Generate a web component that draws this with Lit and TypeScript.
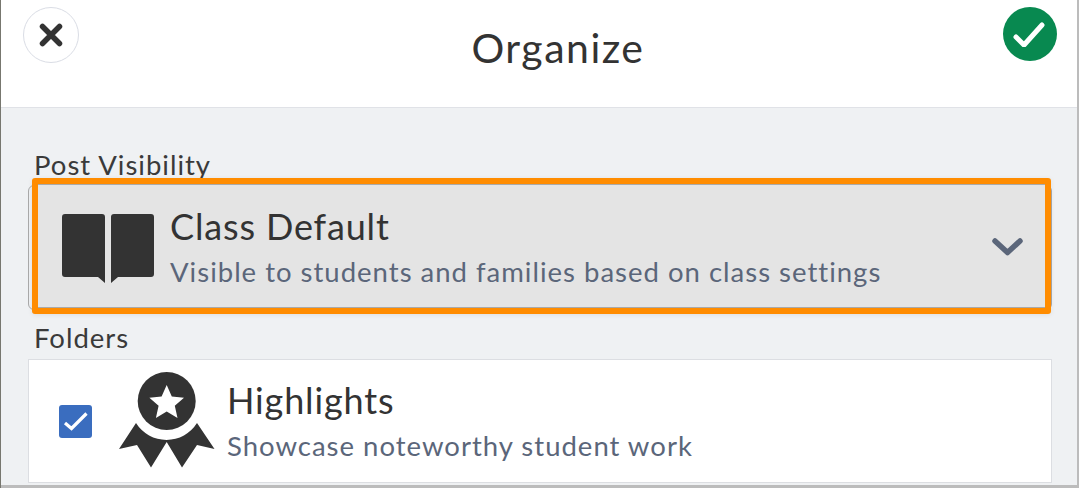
import { LitElement, html, css } from "lit";
import { customElement } from "lit/decorators.js";

@customElement("app-root")
export class AppRoot extends LitElement {
  static styles = css`
    :host {
      display: flex;
      flex-direction: column;
      width: 1079px;
      height: 488px;
      box-sizing: border-box;
      overflow: hidden;
      background: #fff;
      font-family: "Lato", sans-serif;
      color: #333;
      border-left: 1px solid #77776f;
      border-right: 2px solid #bcbcbc;
    }
    .header {
      height: 107px;
      flex: none;
      box-sizing: border-box;
      display: grid;
      grid-template-columns: 1fr auto 1fr;
      align-items: start;
      padding: 7px 20px 0 22px;
    }
    .close {
      width: 56px;
      height: 56px;
      box-sizing: border-box;
      border: 1px solid #dadde5;
      border-radius: 50%;
      display: flex;
      align-items: center;
      justify-content: center;
      background: #fff;
    }
    .title {
      font-size: 41px;
      line-height: 50px;
      margin-top: 16px;
      padding-left: 36px;
      letter-spacing: 1.5px;
    }
    .ok {
      justify-self: end;
      width: 54px;
      height: 54px;
      border-radius: 50%;
      background: #088950;
      display: flex;
      align-items: center;
      justify-content: center;
    }
    .body {
      flex: 1;
      background: #eff1f3;
      border-top: 1px solid #e0e2e7;
      padding: 42px 25px 0 27px;
      display: flex;
      flex-direction: column;
      min-height: 0;
    }
    .label {
      font-size: 27.5px;
      line-height: 30px;
      padding-left: 6px;
      color: #3a3a3a;
      letter-spacing: 1px;
    }
    .select {
      position: relative;
      margin-top: 5px;
      height: 125px;
      box-sizing: border-box;
      border: 1px solid #a9a9a9;
      border-radius: 6px;
      display: flex;
      align-items: center;
      padding: 0 27px 0 33px;
    }
    .ring {
      position: absolute;
      left: 3px;
      right: 0;
      top: -8px;
      bottom: -5px;
      box-sizing: border-box;
      background: #e4e4e4;
      border: 6px solid #ff8c00;
      border-radius: 3px;
      box-shadow: inset 0 1px 0 #a9a9a9, inset 0 -1px 0 #a9a9a9, 0 1px 5px rgba(0, 0, 0, 0.08);
    }
    .select > svg,
    .select > .text {
      position: relative;
    }
    .book {
      margin-top: 2px;
    }
    .text {
      flex: 1;
      margin-left: 16px;
      padding-top: 4px;
      display: flex;
      flex-direction: column;
    }
    .name {
      font-size: 36px;
      line-height: 44px;
      color: #333;
      letter-spacing: 0.85px;
    }
    .desc {
      font-size: 27.5px;
      line-height: 48px;
      color: #5b667a;
      letter-spacing: 1px;
    }
    .folders {
      margin-top: 13px;
    }
    .card {
      margin-top: 6px;
      height: 124px;
      flex: none;
      box-sizing: border-box;
      background: #fff;
      border: 1px solid #dcdee2;
      display: flex;
      align-items: center;
      padding: 0 0 0 30px;
    }
    .check {
      width: 33px;
      height: 33px;
      border-radius: 3px;
      background: #3a6dbf;
      display: flex;
      align-items: center;
      justify-content: center;
      flex: none;
    }
    .card .medal {
      margin-left: 26px;
      flex: none;
    }
    .card .text {
      margin-left: 11px;
      padding-top: 6px;
    }
    .foot {
      height: 3px;
      background: #bcbcbc;
      flex: none;
      margin: 2px -25px 0 -27px;
    }
  `;

  render() {
    return html`
      <div class="header">
        <div class="close">
          <svg width="24" height="24" viewBox="0 0 24 24">
            <path d="M3.500 3.500L20.500 20.500M20.500 3.500L3.500 20.500" stroke="#333" stroke-width="5.500" stroke-linecap="round" fill="none" />
          </svg>
        </div>
        <div class="title">Organize</div>
        <div class="ok">
          <svg width="34" height="26" viewBox="0 0 34 26">
            <path d="M3 16L11 24L29 4" stroke="#fff" stroke-width="5" stroke-linecap="round" stroke-linejoin="round" fill="none" />
          </svg>
        </div>
      </div>
      <div class="body">
        <div class="label">Post Visibility</div>
        <div class="select">
          <div class="ring"></div>
          <svg class="book" width="92" height="69" viewBox="0 0 92 69">
            <path d="M3 0H40A3 3 0 0 1 43 3V69L36 63H3A3 3 0 0 1 0 60V3A3 3 0 0 1 3 0Z" fill="#333" />
            <path d="M52 0H89A3 3 0 0 1 92 3V60A3 3 0 0 1 89 63H56L49 69V3A3 3 0 0 1 52 0Z" fill="#333" />
          </svg>
          <div class="text">
            <div class="name">Class Default</div>
            <div class="desc">Visible to students and families based on class settings</div>
          </div>
          <svg style="position:relative" width="32" height="20" viewBox="0 0 32 20">
            <path d="M3 3L15.500 14.500L28 3" stroke="#5b667a" stroke-width="5.500" stroke-linecap="round" stroke-linejoin="round" fill="none" />
          </svg>
        </div>
        <div class="label folders">Folders</div>
        <div class="card">
          <div class="check">
            <svg width="25" height="21" viewBox="0 0 25 21">
              <path d="M2 12L8.500 17.500L23.500 2.500" stroke="#fff" stroke-width="3.200" fill="none" />
            </svg>
          </div>
          <svg class="medal" width="98" height="98" viewBox="118 372 98 98">
            <circle cx="166.700" cy="401" r="29" fill="#333" />
            <path d="M166.700 385L171.800 396.500L184 397.700L174.800 405.800L177.500 418L166.700 411.600L155.900 418L158.600 405.800L149.400 397.700L161.600 396.500Z" fill="#fff" />
            <path d="M136 423A36 36 0 0 0 197 423L214.500 449L197 445L182 467.500L166.700 442L151 467.500L137 445L119 449Z" fill="#333" />
          </svg>
          <div class="text">
            <div class="name">Highlights</div>
            <div class="desc">Showcase noteworthy student work</div>
          </div>
        </div>
        <div class="foot"></div>
      </div>
    `;
  }
}
